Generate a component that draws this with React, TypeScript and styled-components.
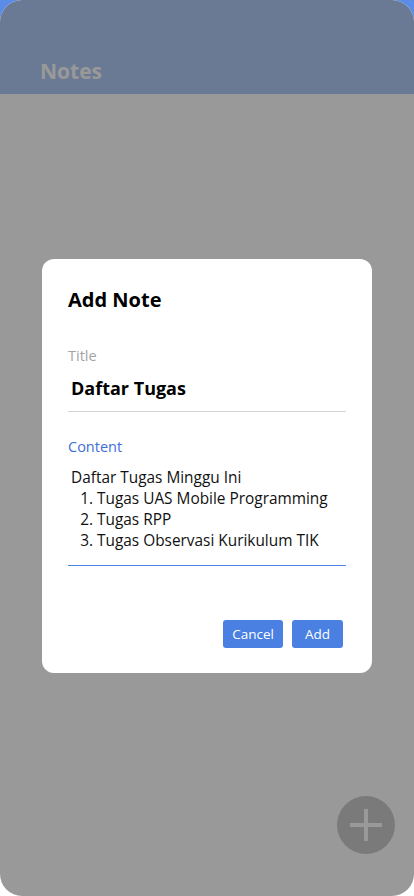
import React from "react";
import styled, { createGlobalStyle } from "styled-components";

const Global = createGlobalStyle`
  html, body { margin: 0; padding: 0; }
  body {
    width: 414px;
    height: 896px;
    overflow: hidden;
    background: linear-gradient(#5b8ce8 0 50%, #ffffff 50% 100%);
    font-family: "Open Sans", "Noto Sans", sans-serif;
  }
`;

const Frame = styled.div`
  position: relative;
  width: 414px;
  height: 896px;
  border-radius: 22px;
  overflow: hidden;
  background: #ffffff;
  display: flex;
  flex-direction: column;
`;

const Header = styled.header`
  height: 94px;
  box-sizing: border-box;
  background: #b2cbf7;
  display: flex;
  align-items: flex-end;
  padding: 0 0 9px 40px;
`;

const HeaderTitle = styled.h1`
  margin: 0;
  font-size: 21px;
  font-weight: 700;
  color: #ffffff;
  line-height: 28px;
`;

const Body = styled.main`
  flex: 1;
  position: relative;
`;

const Fab = styled.button`
  position: absolute;
  right: 19px;
  bottom: 42px;
  width: 58px;
  height: 58px;
  border-radius: 50%;
  border: none;
  background: #cbcbcb;
  display: flex;
  align-items: center;
  justify-content: center;
  padding: 0;
`;

const Backdrop = styled.div`
  position: absolute;
  inset: 0;
  background: rgba(0, 0, 0, 0.4);
  display: flex;
  align-items: flex-start;
  justify-content: center;
  padding-top: 259px;
`;

const Dialog = styled.div`
  width: 330px;
  height: 414px;
  box-sizing: border-box;
  background: #ffffff;
  border-radius: 12px;
  padding: 26px 26px 0 26px;
  display: flex;
  flex-direction: column;
`;

const DialogTitle = styled.h2`
  margin: 0;
  font-size: 20px;
  font-weight: 700;
  color: #000;
  line-height: 30px;
`;

const Field = styled.div<{ $gap: number }>`
  display: flex;
  flex-direction: column;
  margin-top: ${(p) => p.$gap}px;
`;

const Underline = styled.div<{ $focused?: boolean }>`
  height: 1px;
  background: ${(p) => (p.$focused ? "#4f86e6" : "#d4d4d4")};
`;

const Label = styled.label<{ $focused?: boolean }>`
  font-size: 14.5px;
  line-height: 20px;
  height: 20px;
  color: ${(p) => (p.$focused ? "#3d70d8" : "#a3a3a3")};
`;

const TitleValue = styled.div`
  font-size: 18px;
  font-weight: 700;
  color: #000;
  padding: 10px 3px 11px;
  line-height: 24px;
  height: 24px;
`;

const ContentValue = styled.div`
  font-size: 15.4px;
  color: #111;
  padding: 10px 3px 14px;
  line-height: 21px;
  display: flex;
  flex-direction: column;
`;

const Line = styled.div`
  height: 21px;
`;

const List = styled.ol`
  margin: 0;
  padding: 0;
  list-style: none;
  counter-reset: item;
`;

const Item = styled.li`
  counter-increment: item;
  display: flex;
  height: 21px;
  &::before {
    content: counter(item) ".";
    flex: 0 0 22px;
    margin-right: 4px;
    text-align: right;
  }
`;

const Actions = styled.div`
  margin-top: auto;
  margin-bottom: 25px;
  display: flex;
  justify-content: flex-end;
  gap: 9px;
  padding-right: 3px;
`;

const Button = styled.button`
  height: 28px;
  border: none;
  border-radius: 3px;
  background: #4a80e2;
  color: #fff;
  font-family: "Open Sans", "Noto Sans", sans-serif;
  font-size: 13.5px;
  padding: 0 9px;
  min-width: 51px;
`;

export default function App() {
  return (
    <>
      <Global />
      <Frame>
        <Header>
          <HeaderTitle>Notes</HeaderTitle>
        </Header>
        <Body>
          <Fab aria-label="Add note">
            <svg width="36" height="36" viewBox="0 0 36 36">
              <path d="M18 2v32M2 18h32" stroke="#ffffff" strokeWidth="4" />
            </svg>
          </Fab>
        </Body>
        <Backdrop>
          <Dialog>
            <DialogTitle>Add Note</DialogTitle>
            <Field $gap={31}>
              <Label>Title</Label>
              <TitleValue>Daftar Tugas</TitleValue>
              <Underline />
            </Field>
            <Field $gap={25}>
              <Label $focused>Content</Label>
              <ContentValue>
                <Line>Daftar Tugas Minggu Ini</Line>
                <List>
                  <Item>Tugas UAS Mobile Programming</Item>
                  <Item>Tugas RPP</Item>
                  <Item>Tugas Observasi Kurikulum TIK</Item>
                </List>
              </ContentValue>
              <Underline $focused />
            </Field>
            <Actions>
              <Button>Cancel</Button>
              <Button>Add</Button>
            </Actions>
          </Dialog>
        </Backdrop>
      </Frame>
    </>
  );
}
